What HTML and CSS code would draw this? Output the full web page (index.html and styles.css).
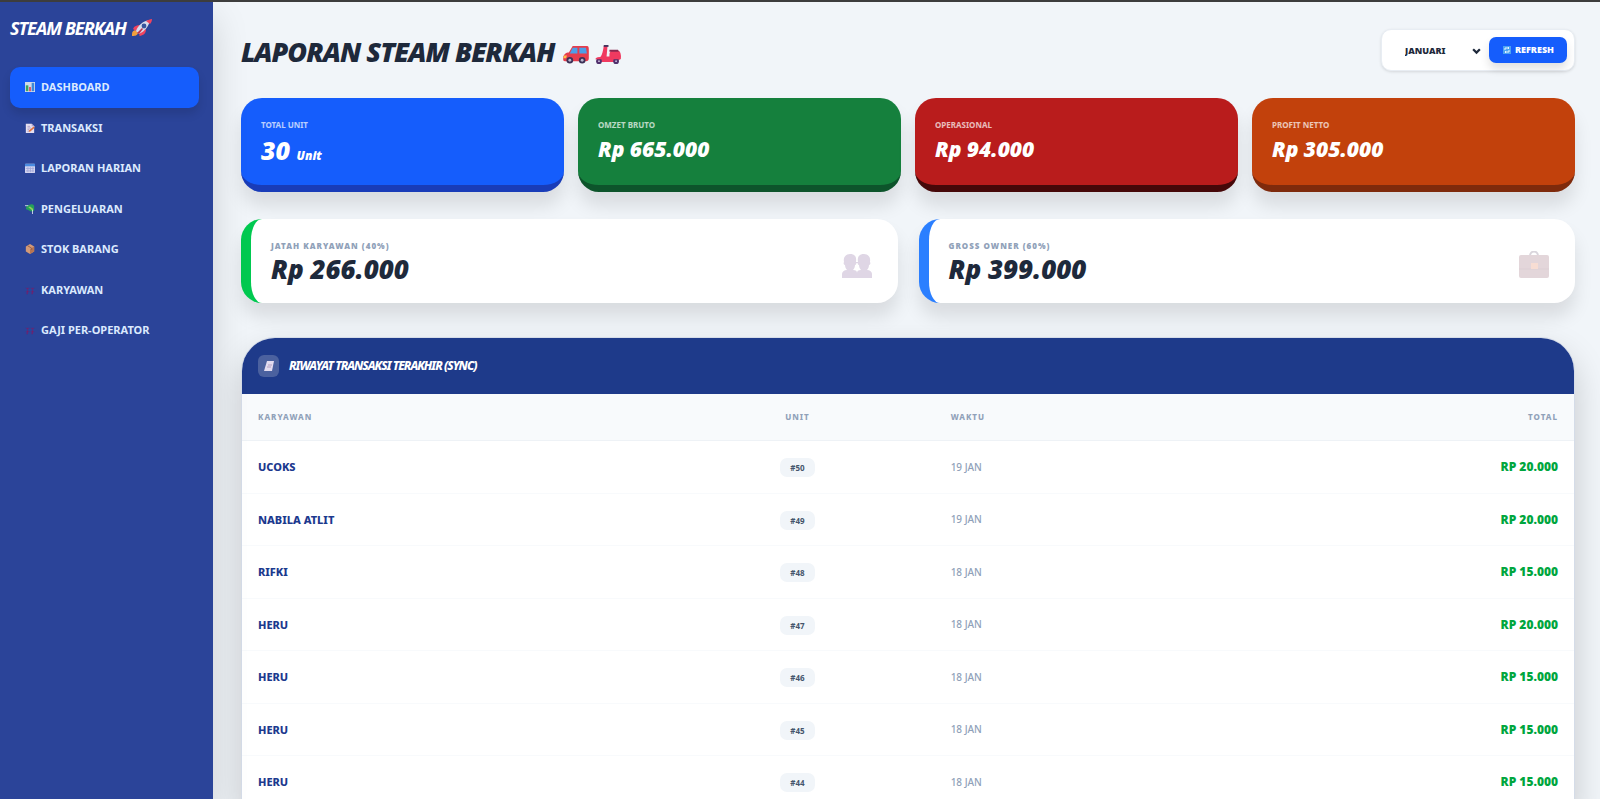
FILE: index.html
```html
<!DOCTYPE html>
<html lang="id">
<head>
<meta charset="utf-8">
<meta name="viewport" content="width=device-width, initial-scale=1">
<title>Steam Berkah</title>
<link rel="stylesheet" href="styles.css">
</head>
<body>
<svg class="defs" aria-hidden="true">
  <symbol id="people" viewBox="0 0 30 24">
    <path d="M2 8C1 3 4 0 8 0s7 2 6 8c1 1 0 3-1 3 0 2-1 4-2 5 3 0 4 1 4 3v5H0v-4c0-2 2-4 5-4-1-1-2-3-2-5-1 0-2-2-1-3z"/>
    <path d="M28 8c1-5-2-8-6-8s-7 2-6 8c-1 1 0 3 1 3 0 2 1 4 2 5-3 0-4 1-4 3v5h15v-4c0-2-2-4-5-4 1-1 2-3 2-5 1 0 2-2 1-3z"/>
    <path d="M13 8h4v1h-4z"/>
  </symbol>
  <symbol id="memo" viewBox="0 0 12 12">
    <path fill="#e6dff0" d="M1 1h7l3 3v8H1z"/><path fill="#b3a4cc" d="M8 1v3h3z"/>
    <path stroke="#a99bc4" d="M3 4h3M3 6h4M3 8h2M3 10h2"/><path stroke="#e0713f" stroke-width="2" d="m5 10 6-5"/>
  </symbol>
</svg>
<div class="app">
  <aside class="sidebar">
    <div class="brand">STEAM BERKAH
      <svg class="brand-icon" viewBox="0 0 20 18" aria-hidden="true">
        <path fill="#f2a03c" d="M0 15c0-3 2-4 4-4l2 3c-1 3-4 3-6 3z"/>
        <path fill="#f0435f" d="M1 10c1-3 4-4 7-4l-4 6zM7 16l3-4 4-2c0 4-2 6-6 7z"/>
        <path fill="#d8dcec" d="M4 12C6 6 11 2 18 1c-1 6-5 11-11 14z"/>
        <path fill="#f0435f" d="M14 2c2-1 4-2 6-2 0 2-1 4-2 5z"/><circle cx="12" cy="7" r="2.4" fill="#37549c"/>
        <path fill="#c0304e" d="m5 14 5-5 1 1-4 5z"/>
      </svg>
    </div>
    <nav class="nav">
      <a class="nav-link active" href="#"><svg class="nav-icon" viewBox="0 0 12 12"><path fill="#cfd9e8" d="M0 0h12v12H0z"/><path fill="#3aa35f" d="M1 4h3v7H1z"/><path fill="#e0405a" d="M5 6h2v5H5z"/><path fill="#3d88d8" d="M8 1h3v10H8z"/></svg>DASHBOARD</a>
      <a class="nav-link" href="#"><svg class="nav-icon"><use href="#memo"/></svg>TRANSAKSI</a>
      <a class="nav-link" href="#"><svg class="nav-icon" viewBox="0 0 12 12"><rect y="1" width="12" height="11" rx="1" fill="#d6d6f0"/><path fill="#4a8be0" d="M0 1h12v3H0z"/><path stroke="#9fa6d6" d="M1 6.500h10M1 9.500h10M3.500 5v6M6.500 5v6M9.500 5v6"/></svg>LAPORAN HARIAN</a>
      <a class="nav-link" href="#"><svg class="nav-icon" viewBox="0 0 12 12"><path fill="#25a05a" d="M2 2c4-1 6-3 9 0v6L8 9C6 9 4 7 1 6z"/><path fill="#8fd05a" d="m4 4 5 4 1-2-4-3z"/><path fill="none" stroke="#dfe7ee" d="M0 2h4M9 7v5"/></svg>PENGELUARAN</a>
      <a class="nav-link" href="#"><svg class="nav-icon" viewBox="0 0 12 12"><path fill="#d39a77" d="m6 0 5 3v6l-5 3-5-3V3z"/><path fill="#b87552" d="m6 6 5-3v6l-5 3z"/><path stroke="#8d5a48" d="m3 2 5 3v2" fill="none"/></svg>STOK BARANG</a>
      <a class="nav-link" href="#"><svg class="nav-icon pair" viewBox="0 0 12 12"><path d="M1 4h4M7 4h4M3 4v7M9 4v7M1 8h4M7 8h4M2 11l1-3M8 11l1-3"/></svg>KARYAWAN</a>
      <a class="nav-link" href="#"><svg class="nav-icon pair" viewBox="0 0 12 12"><path d="M1 4h4M7 4h4M3 4v7M9 4v7M1 8h4M7 8h4M2 11l1-3M8 11l1-3"/></svg>GAJI PER-OPERATOR</a>
    </nav>
  </aside>
  <main class="main">
    <header class="page-head">
      <h1 class="title">LAPORAN STEAM BERKAH
        <span class="vehicles">
        <svg class="vehicle" viewBox="0 0 27 20" aria-hidden="true"><path fill="#e63d4d" d="M0 14c0-4 3-6 6-6l4-7h15c2 0 2 2 2 5v8c0 2-1 3-3 3H2c-2 0-2-1-2-3z"/><path fill="#4c9fe8" d="M10 3h5v6H7zM17 3h7l1 6h-8z"/><path fill="#ffc04a" d="M1 11h3l-1 3H0z"/><g fill="#3c3156"><circle cx="7" cy="16" r="3.500"/><circle cx="20" cy="16" r="3.500"/></g><g fill="#b9b4cc"><circle cx="7" cy="16" r="1.500"/><circle cx="20" cy="16" r="1.500"/></g></svg>
        <svg class="vehicle" viewBox="0 0 27 20" aria-hidden="true"><path fill="#f03a60" d="M9 1h4l-1 11h3c0-3 0-5 2-6h8c3 3 2 7 1 9l-3 3H6c-3 0-5-2-3-4 4-1 5-6 6-13z"/><path fill="#48345f" d="M9 0h5v2H9z"/><path fill="#8b2850" d="M15 5h9l1 2H15z"/><g fill="#50306d"><circle cx="4" cy="17" r="3"/><circle cx="22" cy="17" r="3"/></g><g fill="#c7b8d8"><circle cx="4" cy="17" r="1"/><circle cx="22" cy="17" r="1"/></g><path fill="#f03a60" d="M0 15c2-3 6-3 9 0zM17 11h10v4H17z"/></svg>
        </span>
      </h1>
      <form class="filter">
        <label class="select-wrap"><select class="month" aria-label="Bulan"><option>JANUARI</option></select>
          <svg class="chevron" viewBox="0 0 8 6" aria-hidden="true"><path d="m1 1 3 3 3-3"/></svg></label>
        <button class="refresh" type="button"><svg class="refresh-icon" viewBox="0 0 8 8" aria-hidden="true"><path fill="#4ba3f2" d="M0 0h8v8H0z"/><path fill="none" stroke="#e8f4ff" d="M2 4V2h4M6 4v2H2M5 1l1 1-1 1M3 5 2 6l1 1"/></svg>REFRESH</button>
      </form>
    </header>
    <section class="stats">
      <article class="stat blue"><p class="stat-label">TOTAL UNIT</p><p class="stat-value big">30 <small class="unit">Unit</small></p></article>
      <article class="stat green"><p class="stat-label">OMZET BRUTO</p><p class="stat-value">Rp 665.000</p></article>
      <article class="stat red"><p class="stat-label">OPERASIONAL</p><p class="stat-value">Rp 94.000</p></article>
      <article class="stat orange"><p class="stat-label">PROFIT NETTO</p><p class="stat-value">Rp 305.000</p></article>
    </section>
    <section class="shares">
      <article class="share staff"><div><p class="share-label">JATAH KARYAWAN (40%)</p><p class="share-value">Rp 266.000</p></div>
        <svg class="share-icon" viewBox="0 0 30 30" fill="#dfd6e5" aria-hidden="true"><use href="#people" y="3" width="30" height="24"/></svg></article>
      <article class="share owner"><div><p class="share-label">GROSS OWNER (60%)</p><p class="share-value">Rp 399.000</p></div>
        <svg class="share-icon" viewBox="0 0 30 30" aria-hidden="true"><path fill="none" stroke="#d9d5dc" stroke-width="2" d="M11 5c0-6 8-6 8 0"/><rect y="4" width="30" height="23" rx="2" fill="#e3d6da"/><path stroke="#dccfd4" d="M0 18h30"/><path fill="#f7ddd3" d="M12 12h7v6h-7z"/></svg></article>
    </section>
    <section class="history">
      <header class="history-head"><span class="history-badge"><svg class="history-icon" viewBox="0 0 10 12" aria-hidden="true"><path fill="#e3dcf0" d="M3 1h7L8 11H0z"/><path stroke="#b49fc0" d="M4 5h4M3 7h4"/></svg></span>
        <h2 class="history-title">RIWAYAT TRANSAKSI TERAKHIR (SYNC)</h2></header>
      <table class="table">
        <thead><tr><th class="c-name">KARYAWAN</th><th class="c-unit">UNIT</th><th class="c-time">WAKTU</th><th class="c-total">TOTAL</th></tr></thead>
        <tbody>
          <tr><td class="c-name">UCOKS</td><td class="c-unit"><span class="tag">#50</span></td><td class="c-time">19 JAN</td><td class="c-total">RP 20.000</td></tr>
          <tr><td class="c-name">NABILA ATLIT</td><td class="c-unit"><span class="tag">#49</span></td><td class="c-time">19 JAN</td><td class="c-total">RP 20.000</td></tr>
          <tr><td class="c-name">RIFKI</td><td class="c-unit"><span class="tag">#48</span></td><td class="c-time">18 JAN</td><td class="c-total">RP 15.000</td></tr>
          <tr><td class="c-name">HERU</td><td class="c-unit"><span class="tag">#47</span></td><td class="c-time">18 JAN</td><td class="c-total">RP 20.000</td></tr>
          <tr><td class="c-name">HERU</td><td class="c-unit"><span class="tag">#46</span></td><td class="c-time">18 JAN</td><td class="c-total">RP 15.000</td></tr>
          <tr><td class="c-name">HERU</td><td class="c-unit"><span class="tag">#45</span></td><td class="c-time">18 JAN</td><td class="c-total">RP 15.000</td></tr>
          <tr><td class="c-name">HERU</td><td class="c-unit"><span class="tag">#44</span></td><td class="c-time">18 JAN</td><td class="c-total">RP 15.000</td></tr>
        </tbody>
      </table>
    </section>
  </main>
</div>
</body>
</html>
```
FILE: styles.css
```css
* { box-sizing: border-box; margin: 0; }
body { font-family: "Noto Sans", "Open Sans", sans-serif; font-size: 11px; line-height: 1.5; color: #1e293b; background: #f1f5f9; }
.defs { display: none; }
.app { display: flex; height: 100vh; overflow: hidden; border-top: 2px solid #3d3d3d; }

.sidebar { flex: 0 0 213px; padding: 14px 14px 14px 10px; background: #2b4499; color: #fff; box-shadow: 0 16px 34px rgba(0, 0, 0, .15); z-index: 1; }
.brand { display: flex; align-items: center; gap: 6px; font-size: 18px; line-height: 24px; font-weight: 700; font-style: italic; letter-spacing: -1px; margin-bottom: 27px; }
.brand-icon { width: 20px; height: 18px; }
.nav-link { display: flex; align-items: center; gap: 6px; padding: 12px 15px; border-radius: 10px; color: #dbeafe; font-weight: 700; text-decoration: none; }
.nav-link.active { background: #155dfc; box-shadow: 0 6px 10px rgba(0, 0, 0, .12); }
.nav-icon { width: 10px; height: 10px; flex: none; }
.pair { fill: none; stroke: #6a2472; }

.main { flex: 1; min-width: 0; padding: 27px 25px 0 28px; }
.page-head { display: flex; justify-content: space-between; align-items: center; margin-bottom: 27px; }
.title { display: flex; align-items: center; gap: 9px; padding-top: 3px; font-size: 27px; line-height: 36px; font-weight: 900; font-style: italic; letter-spacing: -1px; }
.vehicles { display: flex; gap: 6px; margin-top: 6px; }
.vehicle { width: 26px; height: 19px; }
.filter { display: flex; align-items: center; padding: 7px; border: 1px solid #e8edf3; border-radius: 10px; background: #fff; box-shadow: 0 1px 3px rgba(0, 0, 0, .12); }
.select-wrap { position: relative; }
.month { appearance: none; width: 100px; border: 0; background: none; padding: 0 16px; font: 900 9px/14px "Noto Sans", sans-serif; color: #1e293b; }
.chevron { position: absolute; right: 8px; top: 6px; width: 9px; height: 7px; fill: none; stroke: #1e293b; stroke-width: 2; pointer-events: none; }
.refresh { display: flex; align-items: center; gap: 4px; border: 0; border-radius: 7px; padding: 6px 13px 6px 14px; background: #155dfc; color: #fff; font: 900 9px/14px "Noto Sans", sans-serif; box-shadow: 0 6px 10px rgba(0, 0, 0, .12); }
.refresh-icon { width: 8px; height: 8px; }

.stats { display: grid; grid-template-columns: repeat(4, 1fr); gap: 14px; margin-bottom: 27px; }
.stat { padding: 20px 20px 22px; border-bottom: 7px solid; border-radius: 21px; color: #fff; box-shadow: 0 14px 18px rgba(0, 0, 0, .1); }
.stat-label { font-size: 8px; line-height: 14px; font-weight: 700; opacity: .7; }
.stat-value { font-size: 21px; line-height: 28px; font-weight: 900; font-style: italic; margin-top: 3px; }
.stat-value.big { font-size: 25px; line-height: 31px; }
.unit { font-size: 12px; line-height: 1; }
.blue { background: #155dfc; border-color: #193cb8; }
.green { background: #15803d; border-color: #0d542b; }
.red { background: #b91c1c; border-color: #460809; }
.orange { background: #c2410c; border-color: #7e2a0c; }
.stat.blue { padding-bottom: 19px; }

.shares { display: grid; grid-template-columns: 1fr 1fr; gap: 21px; margin-bottom: 34px; }
.share { display: flex; justify-content: space-between; align-items: center; padding: 20px 26px 18px 20px; border-left: 10px solid; border-radius: 21px; background: #fff; box-shadow: 0 14px 18px rgba(0, 0, 0, .1); }
.staff { border-color: #00c950; }
.owner { border-color: #2b7fff; }
.share-label { font-size: 8px; line-height: 14px; font-weight: 900; letter-spacing: 1px; color: #90a1b9; }
.share-value { font-size: 26px; line-height: 32px; font-weight: 900; font-style: italic; }
.share-icon { width: 30px; height: 30px; margin-top: 8px; }

.history { border: 1px solid #d5dce8; border-radius: 34px 34px 0 0; overflow: hidden; background: #fff; box-shadow: 0 16px 34px rgba(0, 0, 0, .18); }
.history-head { display: flex; align-items: center; gap: 10px; padding: 17px 16px; background: #1e3a8a; color: #fff; }
.history-badge { display: flex; align-items: center; justify-content: center; width: 21px; height: 22px; border-radius: 6px; background: #4b619f; }
.history-icon { width: 10px; height: 12px; }
.history-title { font-size: 12px; line-height: 16px; font-weight: 800; font-style: italic; letter-spacing: -1px; }
.table { width: 100%; border-collapse: collapse; table-layout: fixed; }
.table th { padding: 15px 16px 16px; font-size: 8px; line-height: 15px; font-weight: 800; letter-spacing: 1px; color: #90a1b9; background: #f8fafc; border-bottom: 1px solid #eef2f6; text-align: left; }
.table td { padding: 18px 16px 17px; border-bottom: 1px solid #f8fafc; font-weight: 800; }
.table .c-name { width: 31.4%; color: #1c398e; }
.table .c-unit { width: 20.6%; text-align: center; }
.table .c-time { width: 22%; }
.table td.c-time { font-weight: 500; font-size: 10px; color: #90a1b9; }
.table .c-total { text-align: right; }
.table td.c-total { color: #00a63e; font-size: 12px; line-height: 16px; font-weight: 900; }
.table th.c-name { color: #90a1b9; }
.tag { padding: 4px 10px; border-radius: 7px; background: #f1f5f9; color: #45556c; font-size: 8px; font-weight: 700; }
```
